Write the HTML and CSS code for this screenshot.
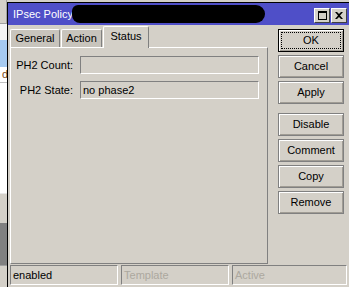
FILE: index.html
```html
<!DOCTYPE html>
<html lang="en">
<head>
    <meta charset="UTF-8">
    <title>IPsec Policy</title>
    <link rel="stylesheet" href="styles.css">
</head>
<body>
    <div class="backdrop">
        <div class="bd-head"></div>
        <div class="bd-light"></div>
        <div class="bd-sel"></div>
        <div class="bd-row"><span>d</span></div>
        <div class="bd-white"></div>
        <div class="bd-gray"></div>
        <div class="bd-dark"></div>
        <div class="bd-foot"></div>
    </div>

    <div class="window">
        <div class="titlebar">
            <span class="title">IPsec Policy</span>
            <span class="redact"></span>
            <div class="tb-buttons">
                <span class="tb-btn">
                    <svg width="9" height="9" viewBox="0 0 9 9"><rect x="0.5" y="0.5" width="8" height="8" fill="none" stroke="#000"/><rect x="0" y="0" width="9" height="2" fill="#000"/></svg>
                </span>
                <span class="tb-btn">
                    <svg width="8" height="7" viewBox="0 0 8 7"><path d="M0 0h2l2 2 2-2h2L5 3.5 8 7H6L4 5 2 7H0l3-3.5z" fill="#000"/></svg>
                </span>
            </div>
        </div>

        <div class="body">
            <div class="main">
                <div class="left">
                    <div class="tabs">
                        <div class="tab tab-general">General</div>
                        <div class="tab tab-action">Action</div>
                        <div class="tab tab-active">Status</div>
                    </div>
                    <div class="panel">
                        <div class="field-label">PH2 Count:</div>
                        <div class="field"></div>
                        <div class="field-label">PH2 State:</div>
                        <div class="field">no phase2</div>
                    </div>
                </div>
                <div class="actions">
                    <div class="btn btn-default"><span class="focus">OK</span></div>
                    <div class="btn">Cancel</div>
                    <div class="btn">Apply</div>
                    <div class="btn btn-gap">Disable</div>
                    <div class="btn">Comment</div>
                    <div class="btn">Copy</div>
                    <div class="btn">Remove</div>
                </div>
            </div>
            <div class="statusbar">
                <div class="status-cell cell-state">enabled</div>
                <div class="status-cell cell-off">Template</div>
                <div class="status-cell cell-off cell-wide">Active</div>
            </div>
        </div>
    </div>
</body>
</html>
```

FILE: styles.css
```css
html, body {
    margin: 0;
    padding: 0;
}

body {
    width: 349px;
    height: 287px;
    overflow: hidden;
    display: flex;
    background: #d4d0c8;
    font-family: "Liberation Sans", Arial, sans-serif;
    font-size: 11px;
    color: #000;
}

/* window behind the dialog */
.backdrop {
    width: 7px;
    display: flex;
    flex-direction: column;
    flex-shrink: 0;
}

.bd-head {
    height: 23px;
    background: #d4d0c8;
    border-right: 1px solid #a0a0a0;
    box-sizing: border-box;
}

.bd-light {
    height: 17px;
    background: #f4f4f4;
    border-top: 1px solid #a0a0a0;
    box-sizing: border-box;
}

.bd-sel {
    height: 27px;
    background: #a6caf0;
}

.bd-row {
    height: 16px;
    background: #fff;
    border-bottom: 1px solid #c0c0c0;
    box-sizing: border-box;
    overflow: hidden;
    text-align: right;
    line-height: 15px;
    color: #7a4a10;
}

.bd-row span {
    margin-right: -1px;
}

.bd-white {
    height: 110px;
    background: #fff;
}

.bd-gray {
    height: 30px;
    background: #d4d0c8;
    border-top: 1px solid #e8e8e8;
    box-sizing: border-box;
}

.bd-dark {
    height: 42px;
    background: #808080;
}

.bd-foot {
    flex: 1;
    background: #d4d0c8;
    border-top: 1px solid #a0a0a0;
}

/* dialog */
.window {
    flex: 1;
    margin-top: 2px;
    border-top: 1px solid #000;
    border-left: 1px solid #000;
    display: flex;
    flex-direction: column;
    min-width: 0;
}

.titlebar {
    height: 22px;
    flex-shrink: 0;
    background: #4f4fc8;
    display: flex;
    align-items: center;
    padding-left: 5px;
    color: #fff;
}

.title {
    white-space: nowrap;
}

.redact {
    width: 193px;
    height: 18px;
    margin-left: -1px;
    background: #000;
    border-radius: 6px 9px 9px 8px;
}

.tb-buttons {
    margin-left: auto;
    margin-right: 2px;
    margin-top: 3px;
    display: flex;
    gap: 1px;
}

.tb-btn {
    width: 14px;
    height: 13px;
    background: #d4d0c8;
    border: 1px solid;
    border-color: #fff #404040 #404040 #fff;
    display: flex;
    align-items: center;
    justify-content: center;
}

.tb-btn svg {
    display: block;
}

.body {
    flex: 1;
    padding: 1px 2px 0 2px;
    display: flex;
    flex-direction: column;
}

.main {
    display: flex;
}

.left {
    width: 258px;
    display: flex;
    flex-direction: column;
}

.tabs {
    height: 21px;
    display: flex;
    align-items: flex-end;
}

.tab {
    height: 18px;
    box-sizing: border-box;
    line-height: 17px;
    text-align: center;
    margin-right: 1px;
    background: #c8c4bc;
    border: 1px solid;
    border-color: #fff #808080 transparent #fff;
    border-bottom: 0;
    border-radius: 2px 2px 0 0;
}

.tab-general {
    width: 50px;
}

.tab-action {
    width: 41px;
}

.tab-active {
    position: relative;
    z-index: 1;
    width: 46px;
    height: 22px;
    line-height: 19px;
    margin-bottom: -1px;
    background: #d4d0c8;
}

.panel {
    height: 217px;
    box-sizing: border-box;
    border: 1px solid;
    border-color: #fff #808080 #808080 #fff;
    display: grid;
    grid-template-columns: 62px 179px;
    grid-auto-rows: 18px;
    column-gap: 7px;
    row-gap: 7px;
    align-content: start;
    padding-top: 8px;
}

.field-label {
    text-align: right;
    line-height: 18px;
    white-space: nowrap;
}

.field {
    border: 1px solid;
    border-color: #808080 #fff #fff #808080;
    line-height: 16px;
    padding-left: 2px;
}

.actions {
    width: 66px;
    margin-left: 10px;
    padding-top: 3px;
    display: flex;
    flex-direction: column;
    gap: 3px;
}

.btn {
    height: 23px;
    box-sizing: border-box;
    border: 1px solid #808080;
    box-shadow: inset 1px 1px #fff, inset -1px -1px #a09c94;
    text-align: center;
    line-height: 21px;
}

.btn-default {
    border-color: #000;
    padding: 2px;
}

.btn-default .focus {
    display: block;
    height: 100%;
    box-sizing: border-box;
    border: 1px dotted #000;
    line-height: 15px;
}

.btn-gap {
    margin-top: 6px;
}

.statusbar {
    margin-top: 1px;
    height: 20px;
    display: flex;
    gap: 3px;
}

.status-cell {
    width: 109px;
    box-sizing: border-box;
    border: 1px solid;
    border-color: #808080 #fff #fff #808080;
    padding-left: 2px;
    line-height: 18px;
}

.cell-off {
    color: #aca89f;
}

.cell-wide {
    width: 116px;
}
```
